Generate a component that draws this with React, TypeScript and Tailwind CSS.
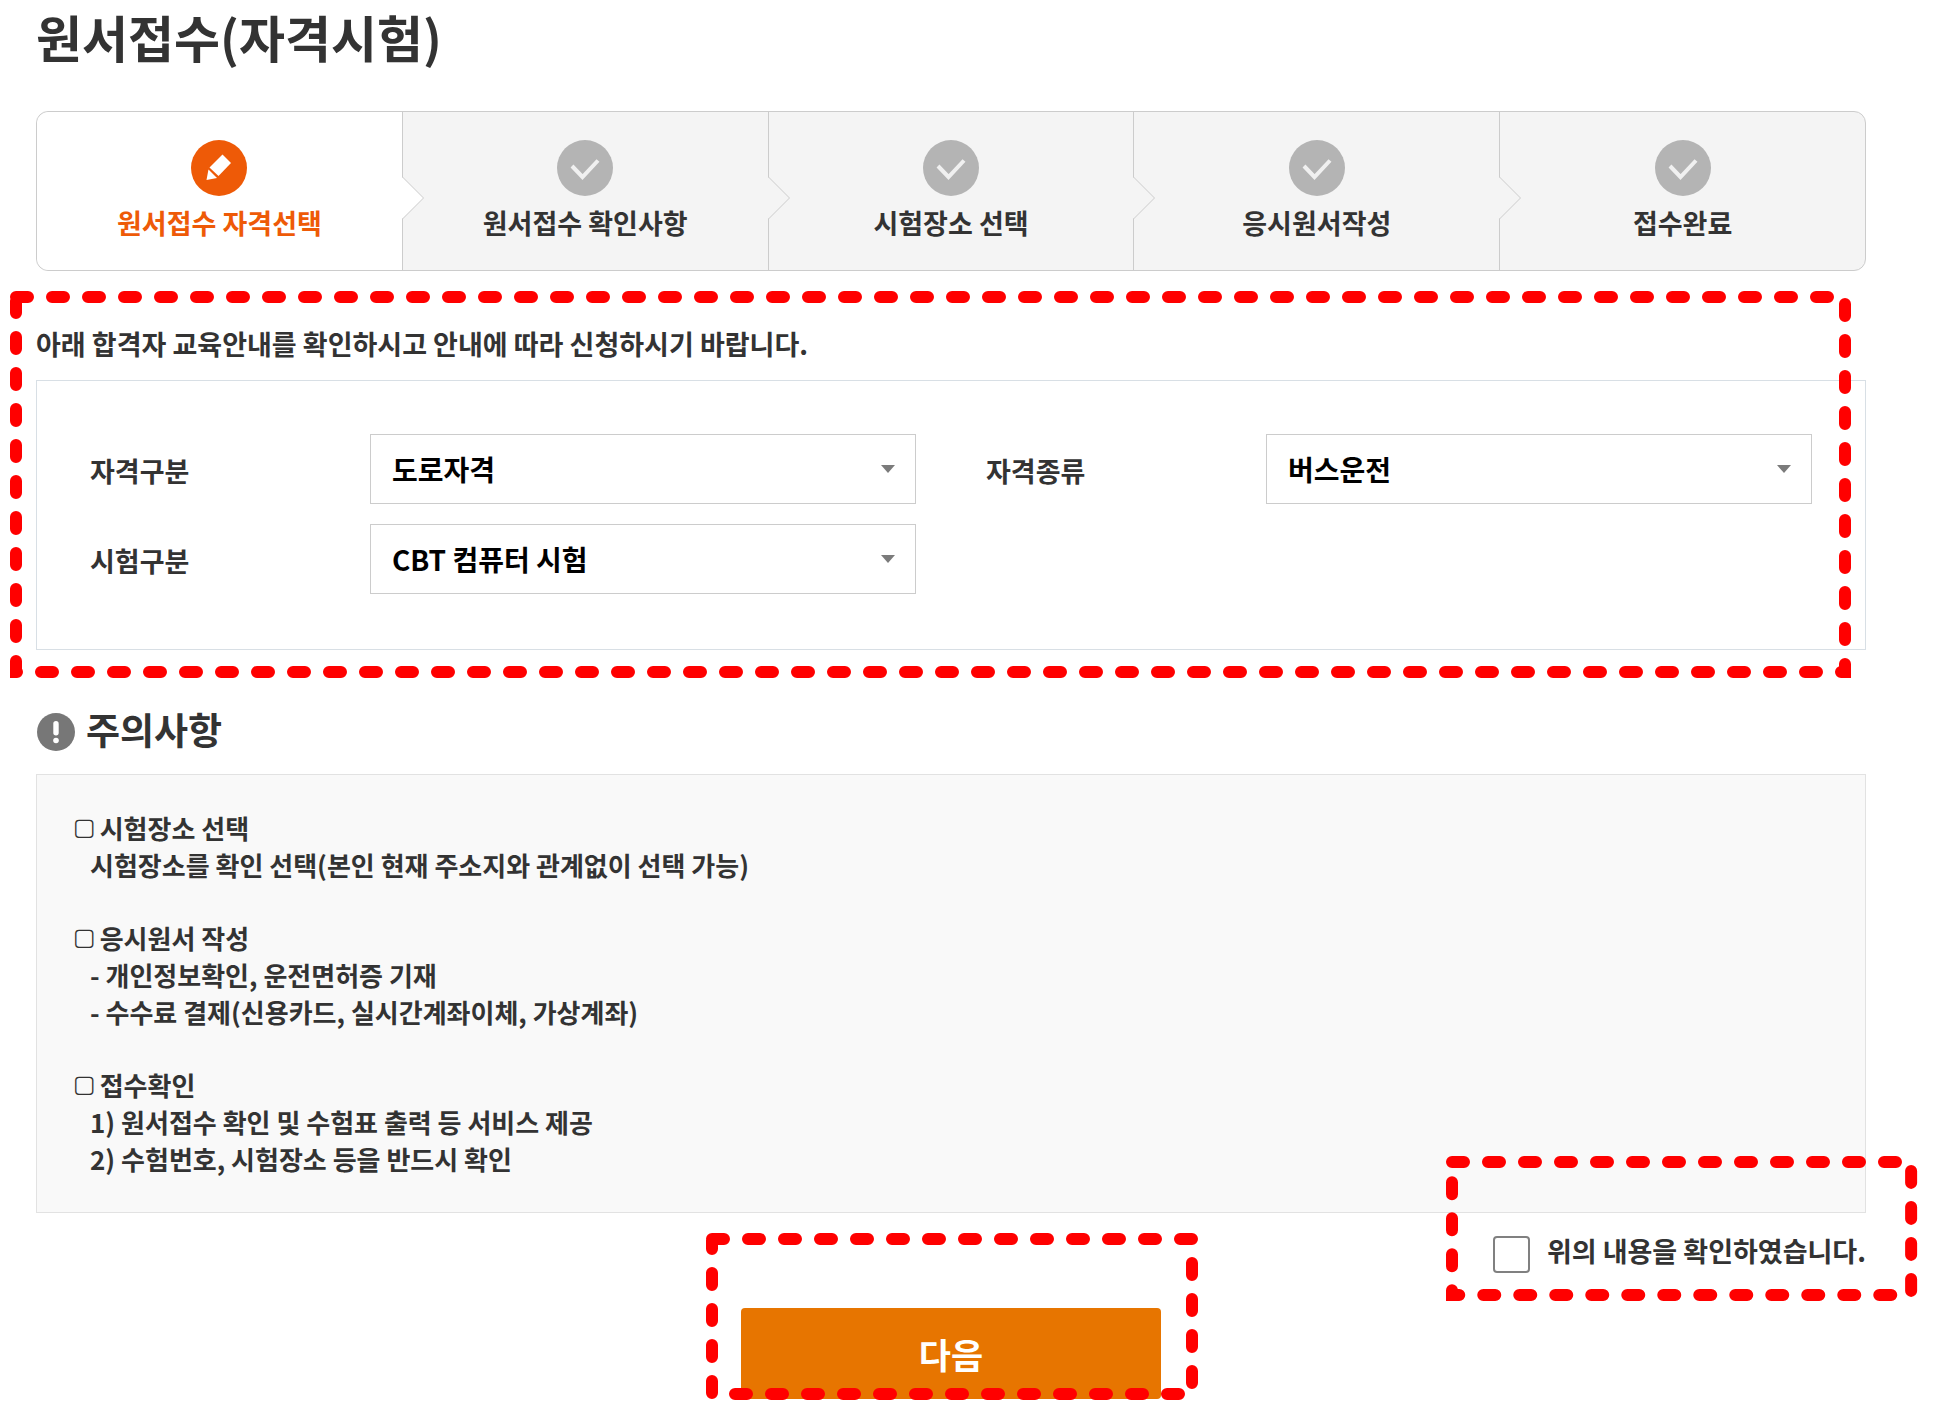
import { useState } from "react";

const steps = ["원서접수 자격선택", "원서접수 확인사항", "시험장소 선택", "응시원서작성", "접수완료"];

const notices = [
  {
    title: "시험장소 선택",
    lines: ["시험장소를 확인 선택(본인 현재 주소지와 관계없이 선택 가능)"],
  },
  {
    title: "응시원서 작성",
    lines: ["- 개인정보확인, 운전면허증 기재", "- 수수료 결제(신용카드, 실시간계좌이체, 가상계좌)"],
  },
  {
    title: "접수확인",
    lines: ["1) 원서접수 확인 및 수험표 출력 등 서비스 제공", "2) 수험번호, 시험장소 등을 반드시 확인"],
  },
];

/* Red dashed outline that highlights a region of the page. */
function Highlight({ className }: { className: string }) {
  return (
    <div className={`pointer-events-none absolute z-10 ${className}`} aria-hidden="true">
      <svg
        className="block h-full w-full overflow-visible"
        viewBox="0 0 100 100"
        preserveAspectRatio="none"
      >
        <path
          d="M0 0 H100 V100 H0 V1"
          vectorEffect="non-scaling-stroke"
          fill="none"
          stroke="#ff0000"
          strokeWidth="12"
          strokeLinecap="round"
          strokeDasharray="12 24"
        />
      </svg>
    </div>
  );
}

function PencilBadge() {
  return (
    <svg className="size-14" viewBox="0 0 56 56" aria-hidden="true">
      <circle cx="28" cy="28" r="28" fill="#ee5a07" />
      <path d="M31.500 14.500 L40 23 L27.500 36 L18.500 27.500 Z" fill="#fff" />
      <path d="M17.500 29.500 L26 38 L15.500 40 Z" fill="#fff" />
    </svg>
  );
}

function CheckBadge() {
  return (
    <svg className="size-14" viewBox="0 0 56 56" aria-hidden="true">
      <circle cx="28" cy="28" r="28" fill="#b4b4b4" />
      <path d="M15 26 L25.500 37 L41 20.500" fill="none" stroke="#f0f0f0" strokeWidth="4" />
    </svg>
  );
}

function Step({ label, active, last }: { label: string; active: boolean; last: boolean }) {
  return (
    <li
      aria-current={active ? "step" : undefined}
      className={`relative flex flex-1 flex-col items-center pt-7 pb-[27px] ${
        active ? "rounded-l-xl bg-white text-[#ee5a07]" : "text-[#333]"
      } ${last ? "" : "border-r border-[#ccc]"}`}
    >
      {active ? <PencilBadge /> : <CheckBadge />}
      <span className="mt-[7px] text-[27px] leading-10 font-bold">{label}</span>
      {!last && (
        <svg
          className="absolute top-[65px] left-full z-10 h-[42px] w-[22px]"
          viewBox="0 0 22 42"
          aria-hidden="true"
        >
          <path d="M0 0 L21.500 21 L0 42 Z" fill={active ? "#fff" : "#f4f4f4"} />
          <path d="M0.500 0 L21.500 21 L0.500 42" fill="none" stroke="#ccc" />
        </svg>
      )}
    </li>
  );
}

function Field({ id, label, options }: { id: string; label: string; options: string[] }) {
  return (
    <div className="flex items-center">
      <label htmlFor={id} className="w-[280px] pt-1 text-[27px] leading-10 font-bold">
        {label}
      </label>
      <div className="relative flex-1">
        <select
          id={id}
          className="block h-[70px] w-full appearance-none border border-[#ccc] bg-white px-[21px] text-[28px] font-bold text-black"
        >
          {options.map((o) => (
            <option key={o}>{o}</option>
          ))}
        </select>
        <svg
          className="pointer-events-none absolute top-1/2 right-[21px] h-2 w-3.5 -translate-y-1/2"
          viewBox="0 0 14 8"
          aria-hidden="true"
        >
          <path d="M0 0 H14 L7 8 Z" fill="#7b7b7b" />
        </svg>
      </div>
    </div>
  );
}

export default function App() {
  const [agreed, setAgreed] = useState(false);
  return (
    <main className="overflow-x-hidden bg-white pr-[82px] pb-5 pl-9 font-['Noto_Sans_CJK_KR','Noto_Sans',sans-serif] text-[#333]">
      <h1 className="text-[50px] leading-[72px] font-bold">원서접수(자격시험)</h1>

      <ol className="mt-[39px] flex rounded-xl border border-[#ccc] bg-[#f4f4f4]">
        {steps.map((s, i) => (
          <Step key={s} label={s} active={i === 0} last={i === steps.length - 1} />
        ))}
      </ol>

      <section className="relative mt-px pt-[52px]">
        <p className="text-[27px] leading-10 font-bold">
          아래 합격자 교육안내를 확인하시고 안내에 따라 신청하시기 바랍니다.
        </p>
        <form className="mt-4 grid grid-cols-2 gap-x-[70px] gap-y-5 border border-[#d8dfe5] px-[53px] pt-[53px] pb-[55px]">
          <Field id="category" label="자격구분" options={["도로자격"]} />
          <Field id="license" label="자격종류" options={["버스운전"]} />
          <Field id="exam" label="시험구분" options={["CBT 컴퓨터 시험"]} />
        </form>
        <Highlight className="top-[25px] right-[21px] -bottom-[22px] -left-5" />
      </section>

      <section className="mt-[52px]">
        <h2 className="flex items-center gap-2.5 text-[37px] leading-[54px] font-bold">
          <svg className="mt-1.5 size-10" viewBox="0 0 40 40" aria-hidden="true">
            <circle cx="20" cy="20" r="19" fill="#777" />
            <rect x="17.300" y="9" width="5.400" height="14.500" rx="2.700" fill="#fff" />
            <circle cx="20" cy="28.500" r="2.800" fill="#fff" />
          </svg>
          주의사항
        </h2>
        <div className="mt-[18px] flex flex-col gap-9 border border-[#e2e2e2] bg-[#f9f9f9] px-9 pt-[34px] pb-[35px] text-[26px] leading-[37px] font-bold">
          {notices.map((n) => (
            <div key={n.title}>
              <h3 className="flex items-center gap-1">
                <span className="font-['DejaVu_Sans',sans-serif] text-2xl leading-[37px] font-normal">▢</span>
                {n.title}
              </h3>
              {n.lines.map((l) => (
                <p key={l} className="pl-[17px]">
                  {l}
                </p>
              ))}
            </div>
          ))}
        </div>
      </section>

      <div className="flex justify-end">
        <div className="relative flex items-start gap-[17px] pt-[23px]">
          <input
            id="agree"
            type="checkbox"
            checked={agreed}
            onChange={(e) => setAgreed(e.target.checked)}
            className="size-[37px] appearance-none rounded-sm border-2 border-[#808080] bg-white checked:bg-[#808080]"
          />
          <label htmlFor="agree" className="text-[27px] leading-[30px] font-bold">
            위의 내용을 확인하였습니다.
          </label>
          <Highlight className="-top-[51px] -right-[45px] h-[133px] -left-[41px]" />
        </div>
      </div>

      <div className="flex justify-center">
        <div className="relative mt-[35px]">
          <button
            type="button"
            className="block h-[91px] w-[420px] rounded bg-[#e77500] pt-0.5 text-[35px] font-bold text-white"
          >
            다음
          </button>
          <Highlight className="-top-[69px] -right-[31px] bottom-[5px] -left-[29px]" />
        </div>
      </div>
    </main>
  );
}
